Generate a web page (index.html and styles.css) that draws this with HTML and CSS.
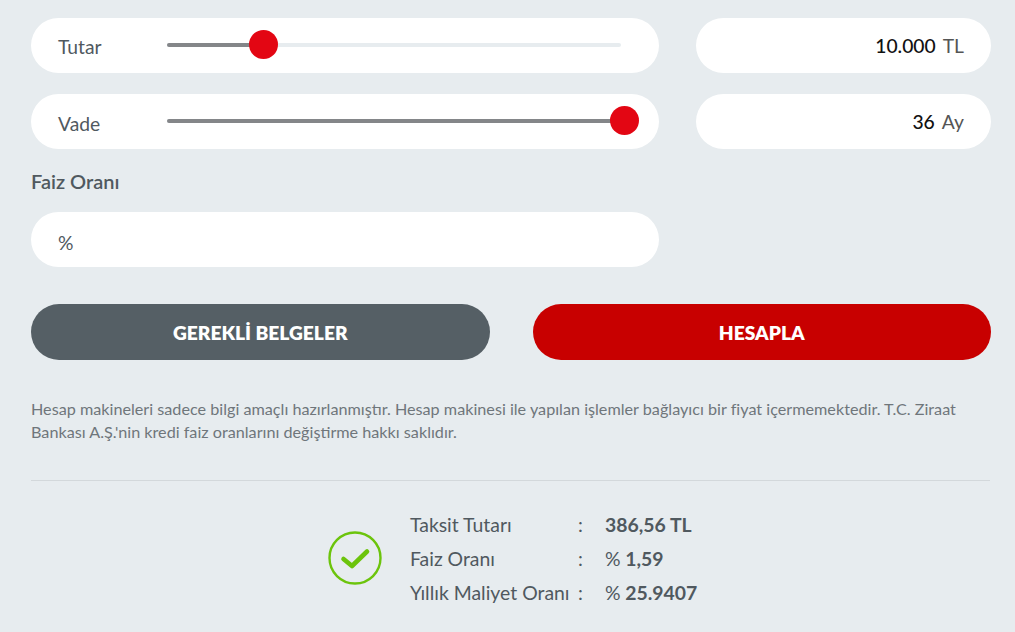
FILE: index.html
```html
<!DOCTYPE html>
<html lang="tr">
<head>
<meta charset="utf-8">
<title>Kredi Hesaplama</title>
<link rel="stylesheet" href="styles.css">
</head>
<body>
<main class="calc">
  <div class="fields">
    <div class="pill slider-pill">
      <span class="pill-label label-up">Tutar</span>
      <div class="track"><div class="fill" style="width:21%"></div><span class="thumb" style="left:21.2%"></span></div>
    </div>
    <div class="pill value-pill"><b>10.000</b> <span>TL</span></div>
    <div class="pill slider-pill">
      <span class="pill-label">Vade</span>
      <div class="track"><div class="fill" style="width:100%"></div><span class="thumb" style="left:100.7%"></span></div>
    </div>
    <div class="pill value-pill"><b>36</b> <span>Ay</span></div>
  </div>
  <h2 class="rate-title">Faiz Oranı</h2>
  <div class="pill rate-pill"><span class="pill-label">%</span></div>
  <div class="actions">
    <button class="btn btn-dark">GEREKLİ BELGELER</button>
    <button class="btn btn-red">HESAPLA</button>
  </div>
  <p class="note">Hesap makineleri sadece bilgi amaçlı hazırlanmıştır. Hesap makinesi ile yapılan işlemler bağlayıcı bir fiyat içermemektedir. T.C. Ziraat Bankası A.Ş.'nin kredi faiz oranlarını değiştirme hakkı saklıdır.</p>
  <hr class="divider">
  <section class="result">
    <svg class="check" width="54" height="54" viewBox="0 0 54 54" aria-hidden="true">
      <circle cx="27" cy="27" r="25.5" fill="none" stroke="#6cc40c" stroke-width="2.4"/>
      <path d="M15.5 28 L24 35 L39 20.5" fill="none" stroke="#6cc40c" stroke-width="4.6" stroke-linecap="round" stroke-linejoin="round"/>
    </svg>
    <dl class="summary">
      <dt>Taksit Tutarı</dt><dd class="colon">:</dd><dd class="val">386,56 TL</dd>
      <dt>Faiz Oranı</dt><dd class="colon">:</dd><dd class="val"><span class="pct">%</span> 1,59</dd>
      <dt>Yıllık Maliyet Oranı</dt><dd class="colon">:</dd><dd class="val"><span class="pct">%</span> 25.9407</dd>
    </dl>
  </section>
</main>
</body>
</html>
```
FILE: styles.css
```css
* { box-sizing: border-box; }
html, body { margin: 0; height: 100%; }
body {
  background: #e7ecef;
  color: #50595f;
  font-family: "Lato", "Liberation Sans", sans-serif;
  overflow: hidden;
}
.calc { padding: 18px 24px 0 31px; }
.fields {
  display: grid;
  grid-template-columns: 628px 295px;
  column-gap: 37px;
  row-gap: 21px;
}
.pill {
  height: 55px;
  background: #fff;
  border-radius: 28px;
  display: flex;
  align-items: center;
  font-size: 19.3px;
}
.slider-pill { padding: 0 38px 0 27px; }
.pill-label { width: 109px; flex: none; padding-top: 3px; }
.pill-label.label-up { padding-top: 1px; }
.track {
  position: relative;
  flex: 1;
  height: 4px;
  margin-top: -1px;
  background: #e7ecef;
  border-radius: 2px;
}
.fill { height: 100%; background: #848689; border-radius: 2px; }
.thumb {
  position: absolute;
  top: 50%;
  width: 29px;
  height: 29px;
  margin: -15px 0 0 -14.5px;
  background: #e30613;
  border-radius: 50%;
}
.value-pill { justify-content: flex-end; gap: 7px; padding: 0 27px 0 0; color: #555; }
.value-pill b { font-weight: 500; color: #111; }
.rate-title { margin: 21px 0 20px; font-size: 20px; line-height: 22px; font-weight: 600; }
.rate-pill { width: 628px; padding-left: 27px; }
.rate-pill .pill-label { padding-top: 5px; }
.actions { display: flex; gap: 43px; margin-top: 37px; }
.btn {
  flex: 1;
  height: 56px;
  border: 0;
  border-radius: 28px;
  color: #fff;
  font: 800 19.2px "Lato", "Liberation Sans", sans-serif;
}
.btn-dark { background: #555f65; }
.btn-red { background: #c80000; }
.note {
  margin: 37px 0 0;
  font-size: 16.2px;
  line-height: 23px;
  color: #6f767b;
}
.divider { margin: 37px 1px 0 0; border: 0; border-top: 1px solid #d3d8db; }
.result {
  display: flex;
  align-items: center;
  gap: 28px;
  margin: 26px 0 0 297px;
}
.check { flex: none; }
.summary {
  display: grid;
  grid-template-columns: 168px 27px auto;
  grid-auto-rows: 34px;
  align-items: center;
  margin: 0;
  font-size: 19.4px;
}
.summary dd { margin: 0; }
.val { font-weight: 700; }
.pct { font-weight: 400; }
```
